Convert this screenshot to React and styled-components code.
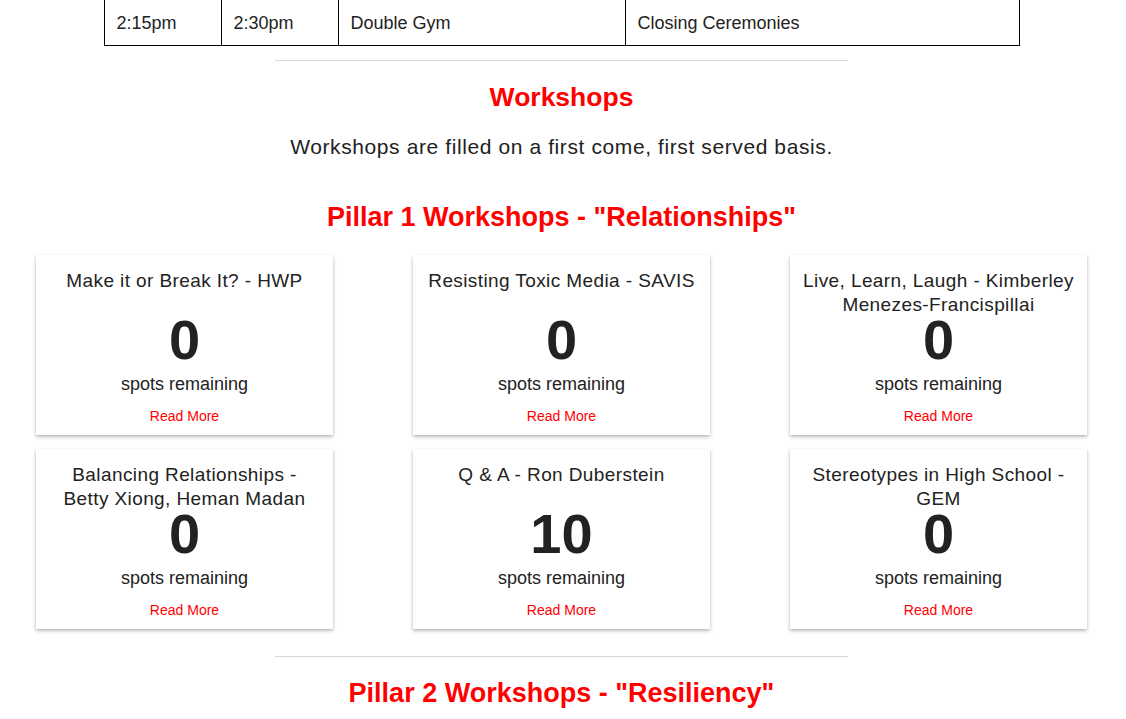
import React from "react";
import styled, { createGlobalStyle } from "styled-components";

const Global = createGlobalStyle`
  html, body { margin: 0; padding: 0; background: #fff; }
  body {
    font-family: "Liberation Sans", Arial, Helvetica, sans-serif;
    color: #222;
  }
`;

const Page = styled.div`
  width: 1123px;
  display: flex;
  flex-direction: column;
  align-items: center;
  margin-top: -2px;
`;

const Schedule = styled.table`
  width: 915px;
  border-collapse: collapse;
  table-layout: fixed;
  font-size: 18px;
  line-height: 22px;
`;

const Cell = styled.td`
  box-sizing: border-box;
  border: 1px solid #000;
  padding: 13px 12px 11px 12px;
  width: ${(p) => p.$w}px;
  text-align: left;
`;

const Rule = styled.hr`
  width: 573px;
  height: 0;
  border: 0;
  border-top: 1px solid #d8d8d8;
  margin: ${(p) => p.$top}px 0 0;
`;

const Heading = styled.h2`
  margin: ${(p) => p.$top}px 0 0;
  color: #f00;
  font-size: ${(p) => p.$size || 27}px;
  line-height: 31px;
  font-weight: bold;
  text-align: center;
`;

const Lead = styled.p`
  margin: 20px 0 0;
  font-size: 21px;
  letter-spacing: 0.6px;
  line-height: 28px;
  text-align: center;
`;

const Grid = styled.div`
  margin-top: 22px;
  width: 1051px;
  display: grid;
  grid-template-columns: repeat(3, 297px);
  column-gap: 80px;
  row-gap: 14px;
`;

const Card = styled.div`
  height: 180px;
  box-sizing: border-box;
  padding: 14px 13px 0;
  background: #fff;
  box-shadow: 0 2px 4px rgba(0, 0, 0, 0.22), 0 1px 2px rgba(0, 0, 0, 0.12);
  display: flex;
  flex-direction: column;
  align-items: center;
  text-align: center;
`;

const Title = styled.div`
  font-size: 19px;
  letter-spacing: 0.4px;
  line-height: 24px;
  height: 48px;
`;

const Count = styled.div`
  font-size: 56px;
  font-weight: bold;
  line-height: 46px;
`;

const Spots = styled.div`
  margin-top: 10px;
  font-size: 18px;
  line-height: 23px;
`;

const ReadMore = styled.a`
  margin-top: 10px;
  font-size: 14px;
  line-height: 20px;
  color: #f00;
  text-decoration: none;
  cursor: pointer;
`;

const workshops = [
  { title: "Make it or Break It? - HWP", spots: 0 },
  { title: "Resisting Toxic Media - SAVIS", spots: 0 },
  { title: "Live, Learn, Laugh - Kimberley Menezes-Francispillai", spots: 0 },
  { title: "Balancing Relationships - Betty Xiong, Heman Madan", spots: 0 },
  { title: "Q & A - Ron Duberstein", spots: 10 },
  { title: "Stereotypes in High School - GEM", spots: 0 },
];

export default function App() {
  return (
    <>
      <Global />
      <Page>
        <Schedule>
          <tbody>
            <tr>
              <Cell $w={117}>2:15pm</Cell>
              <Cell $w={117}>2:30pm</Cell>
              <Cell $w={287}>Double Gym</Cell>
              <Cell $w={394}>Closing Ceremonies</Cell>
            </tr>
          </tbody>
        </Schedule>
        <Rule $top={14} />
        <Heading $top={21} $size={26.5}>Workshops</Heading>
        <Lead>Workshops are filled on a first come, first served basis.</Lead>
        <Heading $top={41}>Pillar 1 Workshops - "Relationships"</Heading>
        <Grid>
          {workshops.map((w) => (
            <Card key={w.title}>
              <Title>{w.title}</Title>
              <Count>{w.spots}</Count>
              <Spots>spots remaining</Spots>
              <ReadMore>Read More</ReadMore>
            </Card>
          ))}
        </Grid>
        <Rule $top={27} />
        <Heading $top={21}>Pillar 2 Workshops - "Resiliency"</Heading>
      </Page>
    </>
  );
}
